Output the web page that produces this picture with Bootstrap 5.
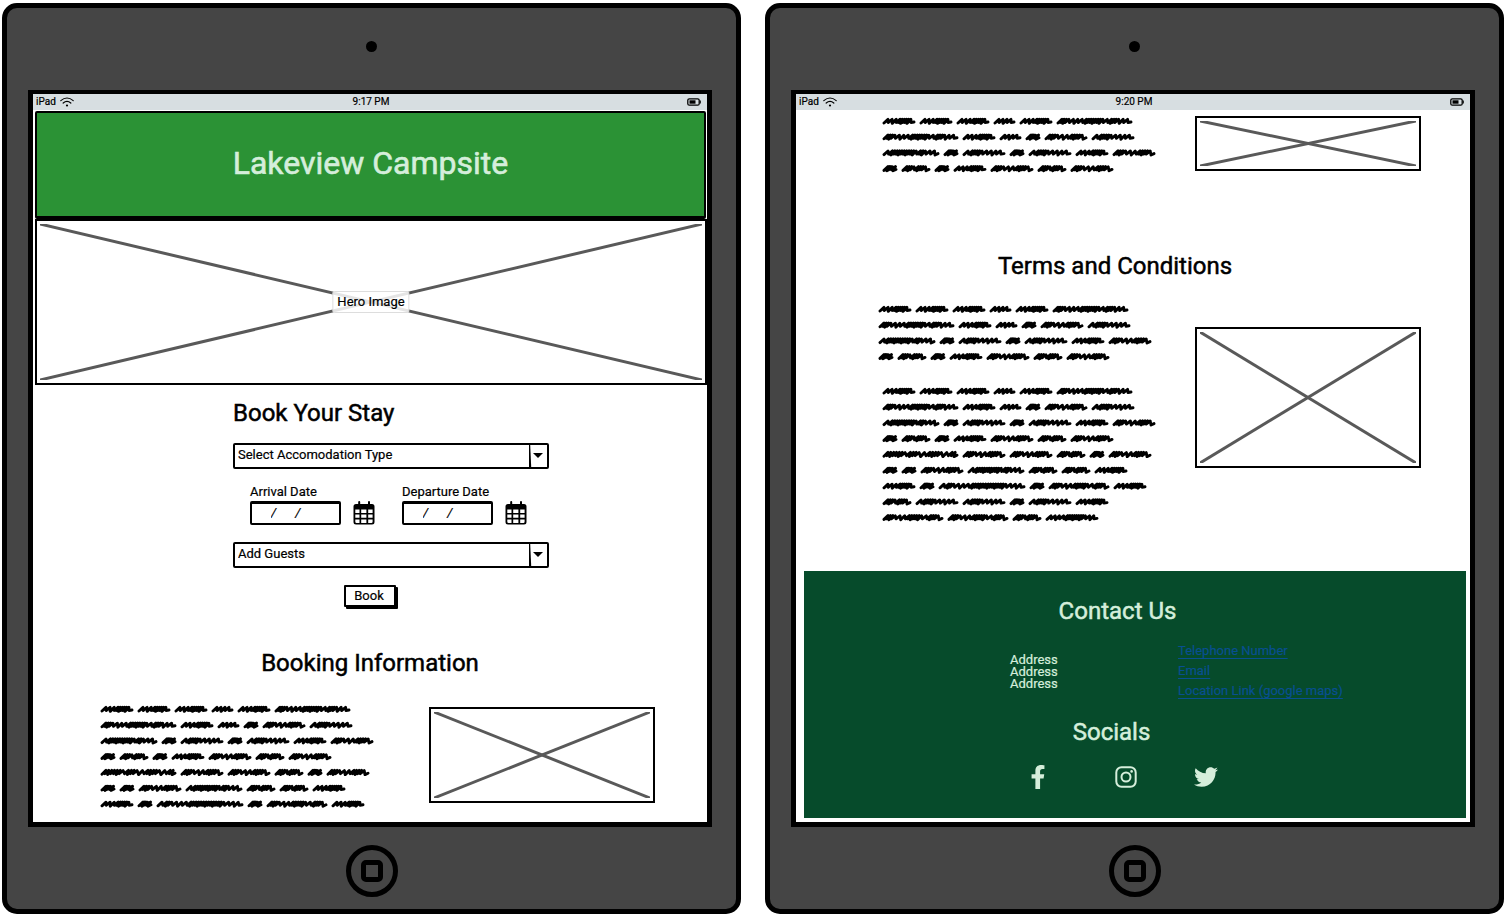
<!DOCTYPE html>
<html lang="en">
<head>
<meta charset="utf-8">
<meta name="viewport" content="width=device-width, initial-scale=1">
<title>Lakeview Campsite</title>
<link href="https://cdn.jsdelivr.net/npm/bootstrap@5.3.0/dist/css/bootstrap.min.css" rel="stylesheet">
<style>
  body { font-family: Roboto, "Liberation Sans", sans-serif; font-size: 13px; line-height: 16px; color: #000; background: #fff; -webkit-text-stroke: .2px; }
  h1 { font-size: 32px; line-height: 40px; color: #d5eedb; padding-bottom: 3px; -webkit-text-stroke: .6px; }
  h2 { font-size: 24px; line-height: 29px; -webkit-text-stroke: .5px; }
  .stage { min-height: 100vh; padding: 3px 2px 2px; gap: 24px; }
  .tablet { flex: 1 1 0; min-width: 0; background: #454545; border: 5px solid #000; border-radius: 15px; padding: 0 24px 0 21px; }
  .bezel { height: 82px; }
  .bezel-top { padding: 0 0 6px 3px; }
  .camera { width: 11px; height: 11px; background: #000; }
  .bezel-bottom { padding: 6px 0 0 3px; }
  .home-btn { width: 52px; height: 52px; border: 5px solid #000; background: transparent; padding: 0; }
  .home-btn span { width: 22px; height: 22px; border: 5px solid #000; border-radius: 5px; }
  .viewport-area { background: #fff; border: 5px solid #000; border-top-width: 4px; }
  .statusbar { height: 16px; background: #d7dee1; font-size: 10px; line-height: 16px; padding: 0 6px 0 3px; }
  .statusbar > * { flex: 1 1 0; }
  .clock { padding-left: 5px; }
  .site-head { height: 108px; margin: 1px 1px 0 2px; background: #2b9235; border: 2px solid #000; border-bottom-width: 3px; border-radius: 2px; }
  .pic { border: 2px solid #000; padding: 3px; }
  .pic svg { width: 100%; height: 100%; }
  .pic line { stroke: #595959; stroke-width: 3; }
  .hero { height: 166px; margin-left: 2px; }
  .hero-label { background: rgba(255,255,255,.84); border: 1px solid #ddd; border-radius: 2px; padding: 2px 4px; }
  .booking { padding-left: 200px; margin-top: 14px; }
  .booking form { width: 316px; margin-top: 15px; }
  .pick { appearance: none; width: 100%; height: 26px; border: 2px solid #000; border-radius: 2px; color: #000; padding: 0 24px 2px 3px;
    background: #fff url("data:image/svg+xml,%3Csvg xmlns='http://www.w3.org/2000/svg' width='18' height='22'%3E%3Cpath d='M0 0 1 22' stroke='black' stroke-width='2.4'/%3E%3Cpath d='M4 8h10l-5 5z'/%3E%3C/svg%3E") no-repeat right top; }
  .dates { margin: 15px 0 17px; padding-left: 17px; gap: 27px; }
  .dates label { height: 17px; }
  .date-box { width: 91px; height: 24px; border: 2px solid #000; border-top-width: 3px; border-radius: 2px; padding: 0 0 3px 19px; color: #000; font-style: italic; }
  .cal-btn { border: 0; background: none; padding: 0; width: 22px; height: 24px; line-height: 0; }
  .book-btn { margin: 17px 0 0 111px; width: 52px; height: 22px; border: 2px solid #000; border-radius: 1px; background: #fff; color: #000; padding: 0 2px 0 0; line-height: 18px; box-shadow: 2px 2px 0 #000; }
  .info-head { margin-top: 42px; }
  .info { margin-top: 23px; padding: 0 52px 0 68px; }
  .side-pic { flex: 0 0 226px; }
  .pic-short { height: 96px; margin-top: 6px; }
  .copy svg { display: block; width: 280px; overflow: visible; }
  .copy path { fill: none; stroke: #000; stroke-width: 2.9; stroke-linecap: round; stroke-linejoin: round; }
  .continued { margin-top: 3px; padding: 0 49px 0 87px; }
  .pic-strip { height: 55px; margin-top: 3px; }
  .terms-head { margin-top: 76px; padding-right: 36px; }
  .terms { margin-top: 20px; padding: 0 49px 0 83px; }
  .later { margin-top: 19px; padding-left: 4px; }
  .pic-tall { height: 141px; margin-top: 26px; }
  .contact { margin: 0 4px 4px 8px; background: #064b2b; color: #d5eedb; padding: 26px 0 29px; }
  .contact-head { padding-right: 35px; }
  .contact-row { margin-top: 15px; padding-left: 206px; }
  .contact address { width: 168px; line-height: 12px; padding-top: 13px; }
  .contact-row a { color: #084f91; line-height: 20px; text-underline-offset: 3px; }
  .social-head { margin-top: 17px; padding-right: 47px; }
  .socials { margin-top: 18px; padding-left: 222px; gap: 56px; }
  .socials a { color: #d5eedb; line-height: 0; }
</style>
</head>
<body>
<main class="stage d-flex">

  <section class="tablet d-flex flex-column" aria-label="Booking page">
    <div class="bezel bezel-top d-flex justify-content-center align-items-center"><span class="camera rounded-circle"></span></div>
    <div class="viewport-area flex-grow-1 d-flex flex-column">
      <div class="statusbar d-flex align-items-center">
        <span class="d-flex align-items-center gap-1">iPad
          <svg width="14" height="10" viewBox="0 0 14 10" fill="none" stroke="#000" stroke-width="1.200" stroke-linecap="round"><path d="M.8 3.600Q7-1.600 13.200 3.600M3.200 6Q7 2.800 10.800 6"/><circle cx="7" cy="8.500" r="1.100" fill="#000" stroke="none"/></svg></span>
        <span class="clock text-center">9:17 PM</span>
        <span class="d-flex justify-content-end"><svg width="14" height="8" viewBox="0 0 14 8"><rect x=".8" y=".8" width="11.400" height="6.400" rx="1.500" fill="none" stroke="#000" stroke-width="1.300"/><path d="M2.500 2.300h6v3.400h-6z"/><path d="M13.300 2.500v3" stroke="#000"/></svg></span>
      </div>
      <header class="site-head d-flex justify-content-center align-items-center"><h1 class="mb-0 fw-normal">Lakeview Campsite</h1></header>
      <div class="pic hero position-relative">
        <svg class="d-block"><line x1="0" y1="0" x2="100%" y2="100%"/><line x1="0" y1="100%" x2="100%" y2="0"/></svg>
        <span class="hero-label position-absolute top-50 start-50 translate-middle text-nowrap">Hero Image</span>
      </div>
      <div class="booking">
        <h2 class="mb-0 fw-normal">Book Your Stay</h2>
        <form>
          <select class="pick d-block" aria-label="Accomodation type"><option>Select Accomodation Type</option></select>
          <div class="dates d-flex">
            <div>
              <label class="d-block" for="arrive">Arrival Date</label>
              <div class="d-flex gap-2"><input class="date-box" id="arrive" type="text" value="/      /"><button class="cal-btn ms-1" type="button" aria-label="Pick arrival date"><svg width="22" height="24" viewBox="0 0 22 24"><use href="#calendar"/></svg></button></div>
            </div>
            <div>
              <label class="d-block" for="depart">Departure Date</label>
              <div class="d-flex gap-2"><input class="date-box" id="depart" type="text" value="/      /"><button class="cal-btn ms-1" type="button" aria-label="Pick departure date"><svg width="22" height="24" viewBox="0 0 22 24"><use href="#calendar"/></svg></button></div>
            </div>
          </div>
          <select class="pick d-block" aria-label="Guests"><option>Add Guests</option></select>
          <button class="book-btn d-block" type="button">Book</button>
        </form>
      </div>
      <h2 class="info-head mb-0 fw-normal text-center">Booking Information</h2>
      <div class="info d-flex justify-content-between align-items-start">
        <div class="copy" data-lines="7"></div>
        <div class="pic side-pic pic-short"><svg class="d-block"><line x1="0" y1="0" x2="100%" y2="100%"/><line x1="0" y1="100%" x2="100%" y2="0"/></svg></div>
      </div>
    </div>
    <div class="bezel bezel-bottom d-flex justify-content-center align-items-center"><button class="home-btn rounded-circle d-flex justify-content-center align-items-center" type="button" aria-label="Home"><span></span></button></div>
  </section>

  <section class="tablet d-flex flex-column" aria-label="Terms page">
    <div class="bezel bezel-top d-flex justify-content-center align-items-center"><span class="camera rounded-circle"></span></div>
    <div class="viewport-area flex-grow-1 d-flex flex-column">
      <div class="statusbar d-flex align-items-center">
        <span class="d-flex align-items-center gap-1">iPad
          <svg width="14" height="10" viewBox="0 0 14 10" fill="none" stroke="#000" stroke-width="1.200" stroke-linecap="round"><path d="M.8 3.600Q7-1.600 13.200 3.600M3.200 6Q7 2.800 10.800 6"/><circle cx="7" cy="8.500" r="1.100" fill="#000" stroke="none"/></svg></span>
        <span class="clock text-center">9:20 PM</span>
        <span class="d-flex justify-content-end"><svg width="14" height="8" viewBox="0 0 14 8"><rect x=".8" y=".8" width="11.400" height="6.400" rx="1.500" fill="none" stroke="#000" stroke-width="1.300"/><path d="M2.500 2.300h6v3.400h-6z"/><path d="M13.300 2.500v3" stroke="#000"/></svg></span>
      </div>
      <div class="continued d-flex justify-content-between align-items-start">
        <div class="copy" data-lines="4"></div>
        <div class="pic side-pic pic-strip"><svg class="d-block"><line x1="0" y1="0" x2="100%" y2="100%"/><line x1="0" y1="100%" x2="100%" y2="0"/></svg></div>
      </div>
      <h2 class="terms-head mb-0 fw-normal text-center">Terms and Conditions</h2>
      <div class="terms d-flex justify-content-between align-items-start">
        <div>
          <div class="copy" data-lines="4"></div>
          <div class="copy later" data-lines="9"></div>
        </div>
        <div class="pic side-pic pic-tall"><svg class="d-block"><line x1="0" y1="0" x2="100%" y2="100%"/><line x1="0" y1="100%" x2="100%" y2="0"/></svg></div>
      </div>
      <footer class="contact mt-auto">
        <h2 class="contact-head mb-0 fw-normal text-center">Contact Us</h2>
        <div class="contact-row d-flex">
          <address class="mb-0">Address<br>Address<br>Address</address>
          <div class="d-flex flex-column align-items-start"><a href="#">Telephone Number</a><a href="#">Email</a><a href="#">Location Link (google maps)</a></div>
        </div>
        <h2 class="social-head mb-0 fw-normal text-center">Socials</h2>
        <div class="socials d-flex">
          <a href="#" aria-label="Facebook"><svg width="24" height="24" viewBox="-96 0 512 512" fill="currentColor"><path d="M279.140 288l14.220-92.660h-88.910v-60.130c0-25.350 12.420-50.060 52.240-50.060h40.420V6.260S260.430 0 225.360 0c-73.220 0-121.080 44.380-121.080 124.720v70.620H22.890V288h81.390v224h100.170V288z"/></svg></a>
          <a class="ms-2" href="#" aria-label="Instagram"><svg width="24" height="24" viewBox="0 0 24 24" fill="none" stroke="currentColor" stroke-width="2"><rect x="2.300" y="2.300" width="19.400" height="19.400" rx="5.200"/><circle cx="12" cy="12" r="4.500"/><circle cx="17.600" cy="6.400" r="1.300" fill="currentColor" stroke="none"/></svg></a>
          <a href="#" aria-label="Twitter"><svg width="24" height="24" viewBox="0 0 512 512" fill="currentColor"><path d="M459.370 151.716c.325 4.548.325 9.097.325 13.645 0 138.720-105.583 298.558-298.558 298.558-59.452 0-114.680-17.219-161.137-47.106 8.447.974 16.568 1.299 25.340 1.299 49.055 0 94.213-16.568 130.274-44.832-46.132-.975-84.792-31.188-98.112-72.772 6.498.974 12.995 1.624 19.818 1.624 9.421 0 18.843-1.300 27.614-3.573-48.081-9.747-84.143-51.980-84.143-102.985v-1.299c13.969 7.797 30.214 12.670 47.431 13.319-28.264-18.843-46.781-51.005-46.781-87.391 0-19.492 5.197-37.360 14.294-52.954 51.655 63.675 129.300 105.258 216.365 109.807-1.624-7.797-2.599-15.918-2.599-24.040 0-57.828 46.782-104.934 104.934-104.934 30.213 0 57.502 12.670 76.670 33.137 23.715-4.548 46.456-13.320 66.599-25.340-7.798 24.366-24.366 44.833-46.132 57.827 21.117-2.273 41.584-8.122 60.426-16.243-14.292 20.791-32.161 39.308-52.628 54.253z"/></svg></a>
        </div>
      </footer>
    </div>
    <div class="bezel bezel-bottom d-flex justify-content-center align-items-center"><button class="home-btn rounded-circle d-flex justify-content-center align-items-center" type="button" aria-label="Home"><span></span></button></div>
  </section>
</main>

<svg width="0" height="0" class="d-none">
  <symbol id="calendar" viewBox="0 0 22 24">
    <path d="M6.200 1v4M16 1v4" stroke="#000" stroke-width="2" stroke-linecap="round"/>
    <path fill-rule="evenodd" d="M3 3h16Q21.500 3 21.500 5.500v15.500Q21.500 23.500 19 23.500h-16Q.5 23.500 .5 21V5.500Q.5 3 3 3zM2.300 8.600v3.400h4.200V8.600zM8.200 8.600v3.400h5.200V8.600zM15.200 8.600v3.400h4.400V8.600zM2.300 13.500v3.300h4.200v-3.300zM8.200 13.500v3.300h5.200v-3.300zM15.200 13.500v3.300h4.400v-3.300zM2.300 18.400v2.300q0 1.200 1.200 1.200h3v-3.500zM8.200 18.400v3.500h5.200v-3.500zM15.200 18.400v3.500h3.200q1.200 0 1.200-1.200v-2.300z"/>
  </symbol>
</svg>

<script src="https://cdn.jsdelivr.net/npm/bootstrap@5.3.0/dist/js/bootstrap.bundle.min.js"></script>
<script>
  // Scribbled words: total width and its run of strokes (s = open loop, t = tight loop)
  const words = {
    a: [32, 'sssttttts'], b: [21, 'ssss'], c: [75, 'tttsssstttttttsstttsss'], d: [42, 'tttssstttts'], r: [42, 'sttttsssss'],
    e: [14, 'tttst'], f: [56, 'sttttttttttsttsss'], g: [28, 'tttsttts'], h: [75, 'ttttttstttssttttsstt'],
    i: [86, 'sttsssstttttttttttttssss'], j: [60, 'tttssstttttssttts'], k: [52, 'ssssttttttttsss']
  };
  const lines = ['a a a b a c', 'c a b e d r', 'f e r e r a d', 'e g e a d g d', 'h d d g e d', 'e e d f g g a', 'a e i e j a', 'g r r e r a', 'j j g k'];
  const pitch = 15.8, space = 5;

  function squiggle(x, y, [width, run]) {
    const size = { s: 4.4, t: 2.3 };
    const total = [...run].reduce((sum, ch) => sum + size[ch], 0);
    const scale = (width - 5) / total;
    let px = x + 1, d = `M${px.toFixed(1)} ${(y + 2).toFixed(1)}`;
    [...run].forEach((ch, n) => {
      const up = ch === 's' ? 1.6 : 1.8, down = n % 3 === 1 ? 2.4 : 1.5;
      d += `L${(px + 4).toFixed(1)} ${(y - up).toFixed(1)}`;
      px += size[ch] * scale;
      d += `L${px.toFixed(1)} ${(y + down).toFixed(1)}`;
    });
    return d + `L${(x + width - 1).toFixed(1)} ${(y + 1).toFixed(1)}`;
  }
  document.querySelectorAll('.copy').forEach(box => {
    const count = +box.dataset.lines;
    let d = '';
    lines.slice(0, count).forEach((line, row) => {
      let x = 0;
      line.split(' ').forEach(key => { d += squiggle(x, 8 + row * pitch, words[key]); x += words[key][0] + space; });
    });
    box.innerHTML = `<svg height="${Math.round(count * pitch)}" role="img" aria-label="Body copy"><path d="${d}"/></svg>`;
  });
</script>
</body>
</html>
